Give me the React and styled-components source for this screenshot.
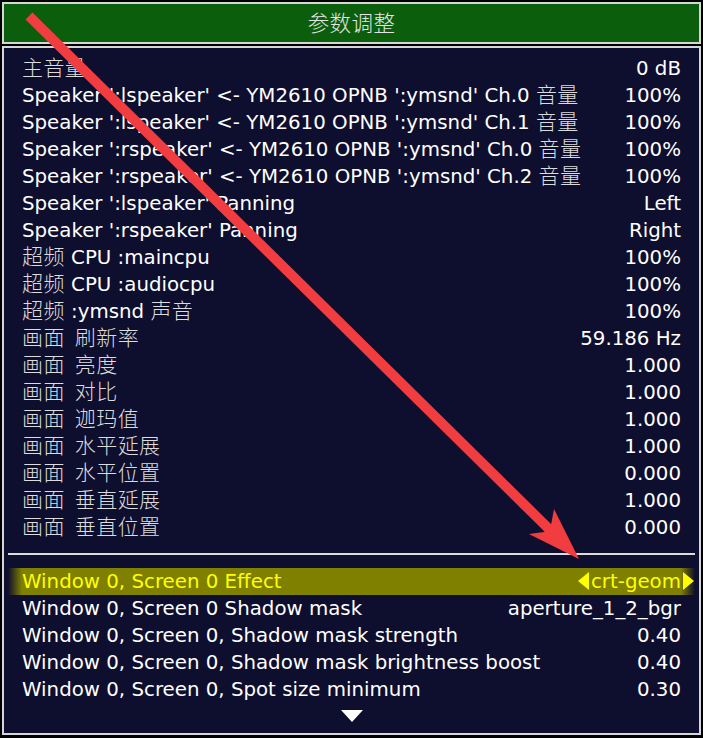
import React from "react";
import styled, { createGlobalStyle } from "styled-components";

const GlobalStyle = createGlobalStyle`
  html, body {
    margin: 0;
    padding: 0;
    background: #000;
  }
  * {
    box-sizing: border-box;
  }
`;

const topItems = [
  ["主音量", "0 dB"],
  ["Speaker ':lspeaker' <- YM2610 OPNB ':ymsnd' Ch.0 音量", "100%"],
  ["Speaker ':lspeaker' <- YM2610 OPNB ':ymsnd' Ch.1 音量", "100%"],
  ["Speaker ':rspeaker' <- YM2610 OPNB ':ymsnd' Ch.0 音量", "100%"],
  ["Speaker ':rspeaker' <- YM2610 OPNB ':ymsnd' Ch.2 音量", "100%"],
  ["Speaker ':lspeaker' Panning", "Left"],
  ["Speaker ':rspeaker' Panning", "Right"],
  ["超频 CPU :maincpu", "100%"],
  ["超频 CPU :audiocpu", "100%"],
  ["超频 :ymsnd 声音", "100%"],
  ["画面 刷新率", "59.186 Hz"],
  ["画面 亮度", "1.000"],
  ["画面 对比", "1.000"],
  ["画面 迦玛值", "1.000"],
  ["画面 水平延展", "1.000"],
  ["画面 水平位置", "0.000"],
  ["画面 垂直延展", "1.000"],
  ["画面 垂直位置", "0.000"],
];

const sliderItems = [
  ["Window 0, Screen 0 Shadow mask", "aperture_1_2_bgr"],
  ["Window 0, Screen 0, Shadow mask strength", "0.40"],
  ["Window 0, Screen 0, Shadow mask brightness boost", "0.40"],
  ["Window 0, Screen 0, Spot size minimum", "0.30"],
];

// CJK runs get their own (thinner, wider) face like the emulator's UI font
const CJK_RUN = /([\u3000-\u9fff\uff00-\uffef]+(?: [\u3000-\u9fff]+)*)/;

const MixedText = ({ text }) =>
  text.split(CJK_RUN).map((part, i) =>
    i % 2 === 1 ? <Cjk key={i}>{part}</Cjk> : part
  );

const App = () => {
  return (
    <Screen>
      <GlobalStyle />
      <TitleBar>
        <Cjk>参数调整</Cjk>
      </TitleBar>
      <MenuBox>
        {topItems.map(([label, value]) => (
          <Row key={label}>
            <Label>
              <MixedText text={label} />
            </Label>
            <Value>{value}</Value>
          </Row>
        ))}
        <Separator />
        <Row selected>
          <Label>Window 0, Screen 0 Effect</Label>
          <Choice>
            <ArrowLeft />
            crt-geom
            <ArrowRight />
          </Choice>
        </Row>
        {sliderItems.map(([label, value]) => (
          <Row key={label}>
            <Label>{label}</Label>
            <Value>{value}</Value>
          </Row>
        ))}
        <MoreRow>
          <MoreArrow />
        </MoreRow>
      </MenuBox>

      <Annotation viewBox="0 0 703 738" width="703" height="738">
        <line x1="29" y1="16" x2="549" y2="529" stroke="#f23d40" strokeWidth="10" />
        <polygon
          points="579,559 554,509 551,525 544,532 529,534"
          fill="#f23d40"
        />
      </Annotation>
    </Screen>
  );
};

const Screen = styled.div`
  position: relative;
  width: 703px;
  height: 738px;
  padding: 2px 2px 3px;
  display: flex;
  flex-direction: column;
  gap: 2px;
  background: #000;
  font-family: "DejaVu Sans", "Noto Sans CJK SC", sans-serif;
  font-size: 19.8px;
  color: #fff;
  overflow: hidden;
`;

const Cjk = styled.span`
  display: inline-block;
  line-height: 22px;
  font-family: "Noto Sans CJK SC", sans-serif;
  font-size: 21px;
  font-weight: 300;
  letter-spacing: 0.4px;
  word-spacing: 5px;
  color: #dcdcdc;
`;

const TitleBar = styled.div`
  height: 42px;
  flex-shrink: 0;
  border: 2px solid #d6d6d6;
  background: #0b5e0b;
  display: flex;
  align-items: center;
  justify-content: center;
  padding-bottom: 2px;
  ${Cjk} {
    font-size: 21.5px;
    color: #e4e4e4;
  }
`;

const MenuBox = styled.div`
  flex: 1;
  border: 2px solid #d6d6d6;
  background: #0e0e2e;
  padding: 6.5px 4px 0;
  display: flex;
  flex-direction: column;
`;

const Row = styled.div`
  height: 27px;
  flex-shrink: 0;
  display: flex;
  align-items: center;
  justify-content: space-between;
  padding: 0 14px;
  white-space: nowrap;
  color: ${(props) => (props.selected ? "#ffff00" : "#ffffff")};
  background: ${(props) =>
    props.selected
      ? "linear-gradient(to right, #0e0e2e 0, #808000 14px, #808000 calc(100% - 14px), #0e0e2e 100%)"
      : "transparent"};
`;

const Label = styled.span`
  line-height: 27px;
`;

const Value = styled.span`
  line-height: 27px;
`;

const Choice = styled.span`
  display: flex;
  align-items: center;
  line-height: 27px;
  margin-right: -13px;
`;

const ArrowLeft = styled.span`
  width: 0;
  height: 0;
  margin-right: 2px;
  border-top: 9px solid transparent;
  border-bottom: 9px solid transparent;
  border-right: 11px solid #ffff00;
`;

const ArrowRight = styled.span`
  width: 0;
  height: 0;
  margin-left: 2px;
  border-top: 9px solid transparent;
  border-bottom: 9px solid transparent;
  border-left: 11px solid #ffff00;
`;

const Separator = styled.div`
  height: 27px;
  flex-shrink: 0;
  display: flex;
  align-items: center;
  &::before {
    content: "";
    flex: 1;
    height: 2px;
    background: #dcdcdc;
  }
`;

const MoreRow = styled.div`
  height: 27px;
  display: flex;
  align-items: center;
  justify-content: center;
`;

const MoreArrow = styled.span`
  width: 0;
  height: 0;
  border-left: 11px solid transparent;
  border-right: 11px solid transparent;
  border-top: 12px solid #ffffff;
`;

const Annotation = styled.svg`
  position: absolute;
  top: 0;
  left: 0;
  pointer-events: none;
`;

export default App;
